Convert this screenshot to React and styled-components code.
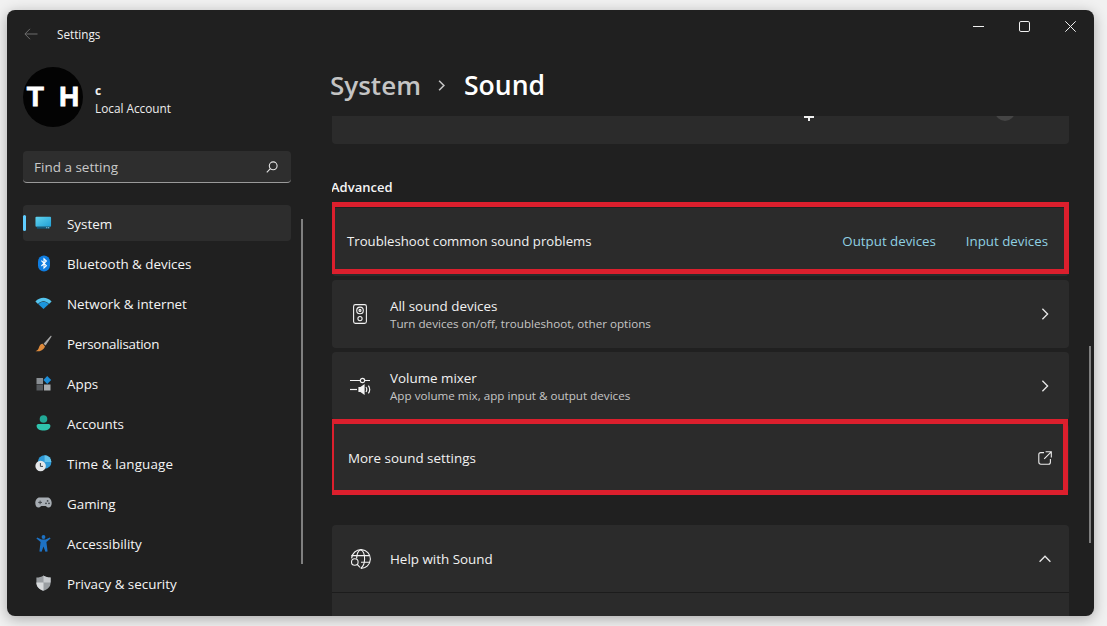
import React from "react";
import styled, { createGlobalStyle } from "styled-components";

const GlobalStyle = createGlobalStyle`
  html, body {
    margin: 0;
    height: 100%;
    overflow: hidden;
    background: #f1f1f1;
  }
  body {
    font-family: "Open Sans", "Noto Sans", sans-serif;
    color: #fff;
  }
`;

const BackIcon = () => (
  <svg width="14" height="12" viewBox="0 0 14 12" fill="none" stroke="#6d6d6d" strokeWidth="1">
    <path d="M13.5 6H1M6 .8 .9 6 6 11.2" />
  </svg>
);

const SearchIcon = () => (
  <svg width="12" height="12" viewBox="0 0 12 12" fill="none" stroke="#e4e4e4" strokeWidth="1.1">
    <circle cx="7.2" cy="4.8" r="3.9" />
    <path d="M4.4 7.6 .8 11.3" />
  </svg>
);

const navIcons = {
  system: (
    <svg width="18" height="14" viewBox="0 0 18 14">
      <defs>
        <linearGradient id="sysG" x1="0" y1="0" x2="1" y2="1">
          <stop offset="0" stopColor="#62d3ee" />
          <stop offset="1" stopColor="#1f9fd6" />
        </linearGradient>
      </defs>
      <rect x="0.5" y="0.5" width="16.5" height="10.5" rx="1" fill="url(#sysG)" />
      <rect x="2" y="11" width="13.5" height="2" fill="#125a7c" />
      <path d="M12 12h1M14 12h1" stroke="#cdeaf5" strokeWidth="1" />
    </svg>
  ),
  bluetooth: (
    <svg width="14" height="17" viewBox="0 0 14 17">
      <rect x="1" y="0.5" width="12" height="16" rx="6" fill="#0f7de0" />
      <path d="M4.4 5.6 9.4 10.8 7 13V3.8L9.4 6 4.4 11" fill="none" stroke="#fff" strokeWidth="1.1" />
    </svg>
  ),
  network: (
    <svg width="17" height="12" viewBox="0 0 17 12">
      <path d="M.4 4.4C5 -.6 12 -.6 16.6 4.4L14 7C10.6 3.4 6.4 3.4 3 7Z" fill="#54c4ee" />
      <path d="M3.4 7.2C6.6 4 10.4 4 13.6 7.2L8.5 12Z" fill="#1b95dc" />
    </svg>
  ),
  brush: (
    <svg width="17" height="17" viewBox="0 0 17 17">
      <path d="M16 .5 8.6 8.8 10.6 10.6 16.6 1.4Z" fill="#a9a9a9" />
      <path d="M7.8 8.8C5.6 9 4.6 10.4 4 12.2 3.6 14 2.4 15.4.6 16.2 4 16.8 8.4 15.6 10 11.4Z" fill="#dd8a3c" />
    </svg>
  ),
  apps: (
    <svg width="16" height="15" viewBox="0 0 16 15">
      <rect x="0.5" y="2" width="6.5" height="6" fill="#8a8f94" />
      <rect x="0.5" y="8.5" width="6.5" height="6" fill="#55595d" />
      <rect x="8" y="8.5" width="6.5" height="6" fill="#a7abae" />
      <path d="M11.2 0 15.2 4 11.2 8 7.4 4Z" fill="#1c8ed8" />
    </svg>
  ),
  accounts: (
    <svg width="15" height="16" viewBox="0 0 15 16">
      <circle cx="7.5" cy="4" r="3.8" fill="#21a896" />
      <path d="M.6 11C.6 9.6 1.6 9 3 9H12C13.4 9 14.4 9.6 14.4 11 14.4 14 11 15.6 7.5 15.6 4 15.6.6 14 .6 11Z" fill="#2fc3ad" />
    </svg>
  ),
  time: (
    <svg width="17" height="17" viewBox="0 0 17 17">
      <circle cx="9.6" cy="7" r="6.8" fill="#2f9ad8" />
      <path d="M9.6.2A6.8 6.8 0 0 1 16.4 7H9.6Z" fill="#62c2ea" />
      <circle cx="5.6" cy="11" r="5.2" fill="#e4e6e8" />
      <path d="M5.4 8V11.4H8" fill="none" stroke="#3a4148" strokeWidth="1" />
    </svg>
  ),
  gaming: (
    <svg width="17" height="12" viewBox="0 0 17 12">
      <path d="M4.6.4H12.4C15 .4 16.7 3 16.7 6 16.7 9.6 14.6 11 12.8 10.4L10.6 9H6.4L4.2 10.4C2.4 11 .3 9.6.3 6 .3 3 2 .4 4.6.4Z" fill="#a7adb3" />
      <path d="M3.2 5.4H7M5.1 3.6V7.2" stroke="#3f4448" strokeWidth="1" />
      <circle cx="12.6" cy="3.9" r=".9" fill="#3f4448" />
      <circle cx="11" cy="6.3" r=".9" fill="#3f4448" />
      <circle cx="14" cy="6.3" r=".9" fill="#3f4448" />
    </svg>
  ),
  accessibility: (
    <svg width="15" height="17" viewBox="0 0 15 17">
      <circle cx="7.5" cy="2" r="1.9" fill="#1d72c4" />
      <path d="M.4 3.4 1.2 2.4 5.4 4.6H9.6L13.8 2.4 14.6 3.4 10.4 7 11.6 16.6 9.4 16.8 7.5 11.4 5.6 16.8 3.4 16.6 4.6 7Z" fill="#1d72c4" />
    </svg>
  ),
  privacy: (
    <svg width="15" height="16" viewBox="0 0 15 16">
      <path d="M7.5 .4C9.6 1.8 11.8 2.4 14.6 2.4V7.4C14.6 11.6 11.6 14.4 7.5 15.8 3.4 14.4.4 11.6.4 7.4V2.4C3.2 2.4 5.4 1.8 7.5 .4Z" fill="#9a9ea2" />
      <path d="M7.5 .4C9.6 1.8 11.8 2.4 14.6 2.4V7.4H7.5Z" fill="#c8cbce" />
      <path d="M7.5 15.8C3.4 14.4.4 11.6.4 7.4H7.5Z" fill="#d8dadc" />
    </svg>
  ),
};

const navItems = [
  { key: "system", label: "System", selected: true },
  { key: "bluetooth", label: "Bluetooth & devices" },
  { key: "network", label: "Network & internet" },
  { key: "brush", label: "Personalisation", tracking: "-0.27px" },
  { key: "apps", label: "Apps" },
  { key: "accounts", label: "Accounts" },
  { key: "time", label: "Time & language", tracking: "0.13px" },
  { key: "gaming", label: "Gaming" },
  { key: "accessibility", label: "Accessibility" },
  { key: "privacy", label: "Privacy & security" },
];

const SpeakerIcon = () => (
  <svg width="14" height="20" viewBox="0 0 14 20" fill="none" stroke="#f2f2f2" strokeWidth="1.1">
    <rect x="0.6" y="0.6" width="12.8" height="18.8" rx="1.8" />
    <circle cx="7" cy="6.4" r="3.3" />
    <circle cx="7" cy="6.4" r="1" />
    <circle cx="7" cy="14.6" r="2.1" />
  </svg>
);

const MixerIcon = () => (
  <svg width="22" height="20" viewBox="0 0 22 20" fill="none" stroke="#f2f2f2" strokeWidth="1.2">
    <path d="M1 4.5H11M16 4.5H21" />
    <circle cx="13.5" cy="4.5" r="2.2" />
    <path d="M1 13.5H8" />
    <path d="M10 11.6H11.8L15 9.2V17.8L11.8 15.4H10Z" fill="#f2f2f2" />
    <path d="M17 11C18 12.6 18 14.4 17 16M19.4 9.6C21 12 21 15 19.4 17.4" />
  </svg>
);

const ChevronRight = ({ size = 12, color = "#e8e8e8", weight = 1.3 }) => (
  <svg width={size} height={size} viewBox="0 0 12 12" fill="none" stroke={color} strokeWidth={weight}>
    <path d="M3.4 .8 8.6 6 3.4 11.2" />
  </svg>
);

const ChevronUp = () => (
  <svg width="12" height="8" viewBox="0 0 12 8" fill="none" stroke="#e8e8e8" strokeWidth="1.3">
    <path d="M.6 6.8 6 1.2 11.4 6.8" />
  </svg>
);

const OpenIcon = () => (
  <svg width="14" height="14" viewBox="0 0 14 14" fill="none" stroke="#ececec" strokeWidth="1.1">
    <path d="M6 1.6H2.8C1.6 1.6.8 2.4.8 3.6V11C.8 12.3 1.7 13.2 3 13.2H10.4C11.6 13.2 12.4 12.4 12.4 11.2V8" />
    <path d="M7.6 .7H13.3V6.4M13.2 .8 6.2 7.8" />
  </svg>
);

const GlobeSearchIcon = () => (
  <svg width="21" height="20" viewBox="0 0 21 20" fill="none" stroke="#f2f2f2" strokeWidth="1.1">
    <path d="M1.6 9.4A9.4 9.4 0 1 1 10.8 19.4" />
    <path d="M1.4 6.6H19.6M11 13.2H20" />
    <path d="M6.6 9.4C6.8 5 8.2 1.8 10.6.8 13.2 1.8 14.6 5.4 14.6 9.8 14.6 14 13.2 17.6 10.8 19.3" />
    <circle cx="4.8" cy="13" r="3.3" fill="#2b2b2b" />
    <path d="M7.2 15.4 10 18.4" />
  </svg>
);

const App = () => (
  <>
    <GlobalStyle />
    <Window>
      <Sidebar>
        <TitleBar>
          <BackIcon />
          <AppTitle>Settings</AppTitle>
        </TitleBar>
        <Profile>
          <Avatar>
            <span>T</span>
            <span>H</span>
          </Avatar>
          <ProfileText>
            <ProfileName>c</ProfileName>
            <ProfileKind>Local Account</ProfileKind>
          </ProfileText>
        </Profile>
        <SearchBox>
          <span>Find a setting</span>
          <SearchIcon />
        </SearchBox>
        <NavList>
          {navItems.map((item) => (
            <NavItem key={item.key} $selected={item.selected}>
              <NavIcon>{navIcons[item.key]}</NavIcon>
              <NavLabel $tracking={item.tracking}>{item.label}</NavLabel>
            </NavItem>
          ))}
        </NavList>
        <SideScroll />
      </Sidebar>

      <Main>
        <WindowButtons>
          <svg width="11" height="11" viewBox="0 0 11 11" stroke="#f0f0f0" strokeWidth="1">
            <path d="M0 5.5H11" />
          </svg>
          <svg width="11" height="11" viewBox="0 0 11 11" fill="none" stroke="#f0f0f0" strokeWidth="1">
            <rect x="0.5" y="0.5" width="10" height="10" rx="1.4" />
          </svg>
          <svg width="11" height="11" viewBox="0 0 11 11" stroke="#f0f0f0" strokeWidth="1">
            <path d="M.3 .3 10.7 10.7M10.7 .3 .3 10.7" />
          </svg>
        </WindowButtons>
        <Breadcrumb>
          <Crumb>System</Crumb>
          <ChevronRight size={11} color="#c4c4c4" weight={1.7} />
          <CurrentCrumb>Sound</CurrentCrumb>
        </Breadcrumb>

        <Content>
          <PartialCard>
            <PlusTip />
            <KnobTip />
          </PartialCard>
          <SectionTitle>Advanced</SectionTitle>
          <Card $frame="-6px 0 2px -2px">
            <TroubleLabel>Troubleshoot common sound problems</TroubleLabel>
            <Links>
              <LinkText>Output devices</LinkText>
              <LinkText>Input devices</LinkText>
            </Links>
          </Card>
          <Card>
            <CardIcon>
              <SpeakerIcon />
            </CardIcon>
            <TwoLineText>
              <CardLabel>All sound devices</CardLabel>
              <CardSub>Turn devices on/off, troubleshoot, other options</CardSub>
            </TwoLineText>
            <ChevronRight />
          </Card>
          <Card>
            <CardIcon>
              <MixerIcon />
            </CardIcon>
            <TwoLineText>
              <CardLabel>Volume mixer</CardLabel>
              <CardSub>App volume mix, app input &amp; output devices</CardSub>
            </TwoLineText>
            <ChevronRight />
          </Card>
          <Card $frame="-5px 1px -3px -3px">
            <CardText>
              <CardLabel>More sound settings</CardLabel>
            </CardText>
            <OpenSlot>
              <OpenIcon />
            </OpenSlot>
          </Card>
          <HelpCard>
            <HelpHead>
              <CardIcon>
                <GlobeSearchIcon />
              </CardIcon>
              <CardText>
                <CardLabel>Help with Sound</CardLabel>
              </CardText>
              <ChevronUp />
            </HelpHead>
            <HelpBody>
              <LinkText>Setting up sound</LinkText>
            </HelpBody>
          </HelpCard>
        </Content>
        <MainScroll />
      </Main>
    </Window>
  </>
);

const Window = styled.div`
  position: relative;
  display: flex;
  width: 1087px;
  height: 606px;
  margin: 10px 0 0 7px;
  background: #202020;
  border-radius: 8px;
  overflow: hidden;
  box-shadow: 0 3px 14px rgba(0, 0, 0, 0.3);
`;
const Sidebar = styled.aside`
  position: relative;
  width: 324px;
  flex: none;
  padding: 0 0 0 16px;
  box-sizing: border-box;
`;
const TitleBar = styled.div`
  display: flex;
  align-items: center;
  height: 48px;
  padding-left: 1px;
`;
const AppTitle = styled.div`
  margin-left: 19px;
  font-size: 11.7px;
  color: #f2f2f2;
`;
const Profile = styled.div`
  display: flex;
  align-items: center;
  gap: 12px;
  margin-top: 9px;
`;
const Avatar = styled.div`
  display: flex;
  align-items: center;
  justify-content: center;
  gap: 15px;
  width: 60px;
  height: 60px;
  border-radius: 50%;
  background: #030303;
  font-family: "Liberation Sans", sans-serif;
  font-size: 28px;
  font-weight: 700;
  color: #fff;
  -webkit-text-stroke: 0.8px #fff;
`;
const ProfileText = styled.div`
  display: flex;
  flex-direction: column;
  gap: 1px;
  margin-top: 4px;
`;
const ProfileName = styled.div`
  font-size: 12px;
  font-weight: 700;
  line-height: 16px;
  color: #f0f0f0;
`;
const ProfileKind = styled.div`
  font-size: 11.8px;
  line-height: 16px;
  color: #ededed;
`;
const SearchBox = styled.div`
  display: flex;
  align-items: center;
  justify-content: space-between;
  box-sizing: border-box;
  width: 268px;
  height: 32px;
  margin-top: 24px;
  padding: 0 13px 0 11px;
  background: #2e2e2e;
  border-radius: 4px;
  border-bottom: 1px solid #9a9a9a;
  font-size: 13.5px;
  color: #c9c9c9;
`;
const NavList = styled.nav`
  display: flex;
  flex-direction: column;
  gap: 4px;
  width: 268px;
  margin-top: 22px;
`;
const NavItem = styled.div`
  position: relative;
  display: flex;
  align-items: center;
  height: 36px;
  padding-left: 12px;
  border-radius: 4px;
  background: ${(p) => (p.$selected ? "#2d2d2d" : "transparent")};

  ${(p) =>
    p.$selected &&
    `&::before {
      content: "";
      position: absolute;
      left: 0;
      top: 10px;
      width: 3px;
      height: 16px;
      border-radius: 2px;
      background: #60cdff;
    }`}
`;
const NavIcon = styled.span`
  display: flex;
  align-items: center;
  justify-content: center;
  width: 17px;
  margin-right: 15px;
`;
const NavLabel = styled.span`
  margin-top: 2px;
  font-size: 13.4px;
  letter-spacing: ${(p) => p.$tracking || "0"};
  color: #f5f5f5;
`;
const SideScroll = styled.div`
  position: absolute;
  left: 294px;
  top: 209px;
  width: 2px;
  height: 345px;
  background: #7f7f7f;
`;
const Main = styled.main`
  position: relative;
  flex: 1;
  min-width: 0;
`;
const WindowButtons = styled.div`
  position: absolute;
  right: 18px;
  top: 11px;
  display: flex;
  gap: 35px;
`;
const Breadcrumb = styled.div`
  display: flex;
  align-items: center;
  gap: 15px;
  height: 106px;
  padding-top: 44px;
  margin-left: -1px;
  box-sizing: border-box;
`;
const Crumb = styled.div`
  font-size: 26px;
  font-weight: 600;
  color: #c4c4c4;
`;
const CurrentCrumb = styled(Crumb)`
  margin-left: 2px;
  font-size: 26.6px;
  color: #ffffff;
`;
const Content = styled.div`
  display: flex;
  flex-direction: column;
  gap: 4px;
  width: 737px;
  margin-left: 1px;
  height: 500px;
  overflow: hidden;
`;
const PartialCard = styled.div`
  display: flex;
  align-items: flex-start;
  height: 28px;
  flex: none;
  padding-left: 472px;
  background: #2b2b2b;
  border-radius: 0 0 4px 4px;
  overflow: hidden;
`;
const PlusTip = styled.div`
  width: 10px;
  height: 5px;
  background: linear-gradient(#f0f0f0 2px, transparent 2px) top / 10px 5px no-repeat,
    linear-gradient(#f0f0f0, #f0f0f0) center / 2px 5px no-repeat;
`;
const KnobTip = styled.div`
  width: 20px;
  height: 20px;
  margin: -15px 0 0 181px;
  border-radius: 50%;
  background: #454545;
`;
const SectionTitle = styled.div`
  margin: 30px 0 8px -1px;
  font-size: 13px;
  font-weight: 600;
  line-height: 18px;
  color: #f5f5f5;
`;
const Card = styled.div`
  position: relative;
  display: flex;
  align-items: center;
  flex: none;
  height: 68px;
  padding: 0 18px 0 16px;
  background: #2b2b2b;
  border-radius: 4px;

  ${(p) =>
    p.$frame &&
    `&::after {
      content: "";
      position: absolute;
      inset: ${p.$frame};
      border: 5px solid #dc1f2d;
    }`}
`;
const CardIcon = styled.span`
  display: flex;
  align-items: center;
  justify-content: center;
  width: 24px;
  margin-right: 18px;
`;
const CardText = styled.div`
  flex: 1;
  min-width: 0;
`;
const TwoLineText = styled(CardText)`
  padding-top: 2px;
`;
const CardLabel = styled.div`
  font-size: 13.4px;
  line-height: 18px;
  color: #f2f2f2;
`;
const TroubleLabel = styled(CardLabel)`
  flex: 1;
  margin: -2px 0 0 -1px;
  font-size: 13.2px;
`;
const CardSub = styled.div`
  font-size: 11.65px;
  line-height: 18px;
  color: #c6c6c6;
`;
const OpenSlot = styled.span`
  display: flex;
  margin-right: -1px;
`;
const Links = styled.div`
  display: flex;
  gap: 30px;
  margin: -2px 3px 0 0;
`;
const LinkText = styled.div`
  font-size: 13.3px;
  color: #8fd0e2;
`;
const HelpCard = styled.div`
  flex: none;
  margin-top: 29px;
  background: #2b2b2b;
  border-radius: 4px;
`;
const HelpHead = styled.div`
  display: flex;
  align-items: center;
  height: 67px;
  padding: 0 18px 0 16px;
  border-bottom: 1px solid #1c1c1c;
`;
const HelpBody = styled.div`
  padding: 21px 0 20px 58px;
`;
const MainScroll = styled.div`
  position: absolute;
  right: 3px;
  top: 336px;
  width: 2px;
  height: 197px;
  background: #7f7f7f;
`;

export default App;
